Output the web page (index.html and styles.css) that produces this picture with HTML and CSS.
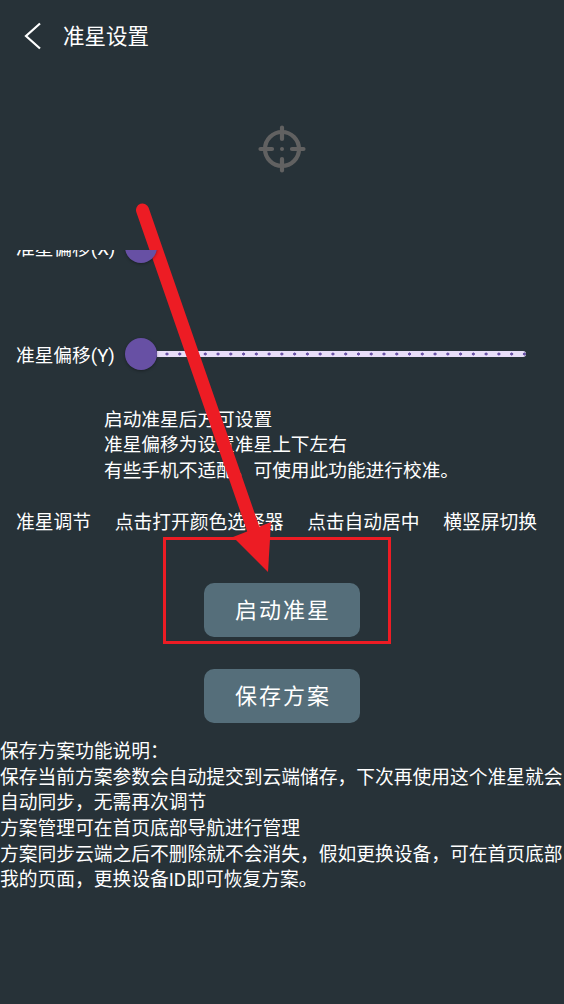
FILE: index.html
```
<!DOCTYPE html>
<html lang="zh-CN">
<head>
<meta charset="utf-8">
<title>准星设置</title>
<link rel="stylesheet" href="styles.css">
</head>
<body>
<div class="app">
  <header class="topbar">
    <svg class="back" viewBox="0 0 18 28" width="18" height="28"><path d="M16 1.5 L2 14 L16 26.5" fill="none" stroke="#fff" stroke-width="2.2"/></svg>
    <h1 class="title">准星设置</h1>
  </header>
  <div class="preview">
    <svg viewBox="0 0 48 48" width="48" height="48" fill="none" stroke="#616161" stroke-width="4.2" stroke-linecap="round">
      <circle cx="24" cy="24" r="17"/>
      <path d="M24 2.500V14M24 34V45.500M2.500 24H14M34 24H45.500"/>
      <circle cx="24" cy="24" r="2" fill="#616161" stroke="none"/>
    </svg>
  </div>
  <main class="scroller">
    <div class="scroll-content">
      <div class="slider-row">
        <span class="slider-label">准星偏移(X)</span>
        <div class="slider"><span class="thumb"></span><span class="track"></span></div>
      </div>
      <div class="slider-row">
        <span class="slider-label">准星偏移(Y)</span>
        <div class="slider"><span class="thumb"></span><span class="track"></span></div>
      </div>
      <div class="notes">
        <p>启动准星后方可设置</p>
        <p>准星偏移为设置准星上下左右</p>
        <p>有些手机不适配，可使用此功能进行校准。</p>
      </div>
      <nav class="actions">
        <span>准星调节</span>
        <span>点击打开颜色选择器</span>
        <span>点击自动居中</span>
        <span>横竖屏切换</span>
      </nav>
      <div class="buttons">
        <button class="btn">启动准星</button>
        <button class="btn">保存方案</button>
      </div>
      <div class="help">
        <p>保存方案功能说明：</p>
        <p>保存当前方案参数会自动提交到云端储存，下次再使用这个准星就会自动同步，无需再次调节</p>
        <p>方案管理可在首页底部导航进行管理</p>
        <p>方案同步云端之后不删除就不会消失，假如更换设备，可在首页底部我的页面，更换设备ID即可恢复方案。</p>
      </div>
    </div>
  </main>
  <svg class="annotation" viewBox="0 0 564 1004" width="564" height="1004">
    <rect x="164.500" y="538.500" width="225" height="104" fill="none" stroke="#ed1c24" stroke-width="3"/>
    <path d="M142.500 210 L255 534" fill="none" stroke="#ed1c24" stroke-width="13" stroke-linecap="round"/>
    <path d="M268 572 L233 537 L271 522 Z" fill="#ed1c24"/>
  </svg>
</div>
</body>
</html>
```
FILE: styles.css
```
* { box-sizing: border-box; }
html, body { margin: 0; padding: 0; }
body {
  background: #273238;
  color: #fff;
  font-family: "Roboto", "Noto Sans CJK SC", sans-serif;
}
.app {
  position: relative;
  width: 564px;
  height: 1004px;
  overflow: hidden;
  display: flex;
  flex-direction: column;
}
.topbar {
  height: 72px;
  display: flex;
  align-items: center;
  gap: 21px;
  padding-left: 24px;
}
.back { display: block; }
.title {
  margin: 2px 0 0;
  font-size: 21.500px;
  font-weight: 400;
  line-height: 1;
}
.preview {
  height: 178px;
  display: flex;
  justify-content: center;
  padding-top: 53px;
}
.scroller {
  flex: 1;
  min-height: 0;
  overflow: hidden;
}
.scroll-content { margin-top: -56.500px; }
.slider-row {
  height: 107px;
  display: flex;
  align-items: center;
  padding-left: 16px;
}
.slider-label {
  width: 109px;
  padding-bottom: 2px;
  font-size: 18.700px;
  white-space: nowrap;
}
.slider {
  position: relative;
  display: flex;
  align-items: center;
  width: 401px;
}
.thumb {
  flex: none;
  width: 32px;
  height: 32px;
  border-radius: 50%;
  background: #6750a4;
  box-shadow: 0 1px 3px rgba(0, 0, 0, .35);
  position: relative;
  z-index: 1;
}
.track {
  flex: 1;
  height: 6px;
  border-radius: 0 3px 3px 0;
  background-color: #e8def8;
  background-image: radial-gradient(circle, #6750a4 1.300px, transparent 1.800px);
  background-size: 12.770px 6px;
  background-position: 3.600px 0;
}
.notes {
  padding-left: 104px;
  font-size: 18.700px;
  line-height: 25.600px;
}
.notes p, .help p { margin: 0; }
.actions {
  display: flex;
  gap: 23.700px;
  margin-top: 26px;
  padding-left: 16px;
  font-size: 18.750px;
  line-height: 26px;
  white-space: nowrap;
}
.buttons {
  display: flex;
  flex-direction: column;
  align-items: center;
  gap: 32px;
  margin-top: 46.700px;
}
.btn {
  width: 156px;
  height: 54px;
  padding: 0 0 4px 2px;
  border: 0;
  border-radius: 10px;
  background: #556e7a;
  color: #fff;
  font-family: inherit;
  font-size: 22px;
  letter-spacing: 2px;
}
.help {
  margin-top: 17.300px;
  font-size: 18.750px;
  line-height: 25.600px;
}
.annotation {
  position: absolute;
  left: 0;
  top: 0;
  pointer-events: none;
}
```
